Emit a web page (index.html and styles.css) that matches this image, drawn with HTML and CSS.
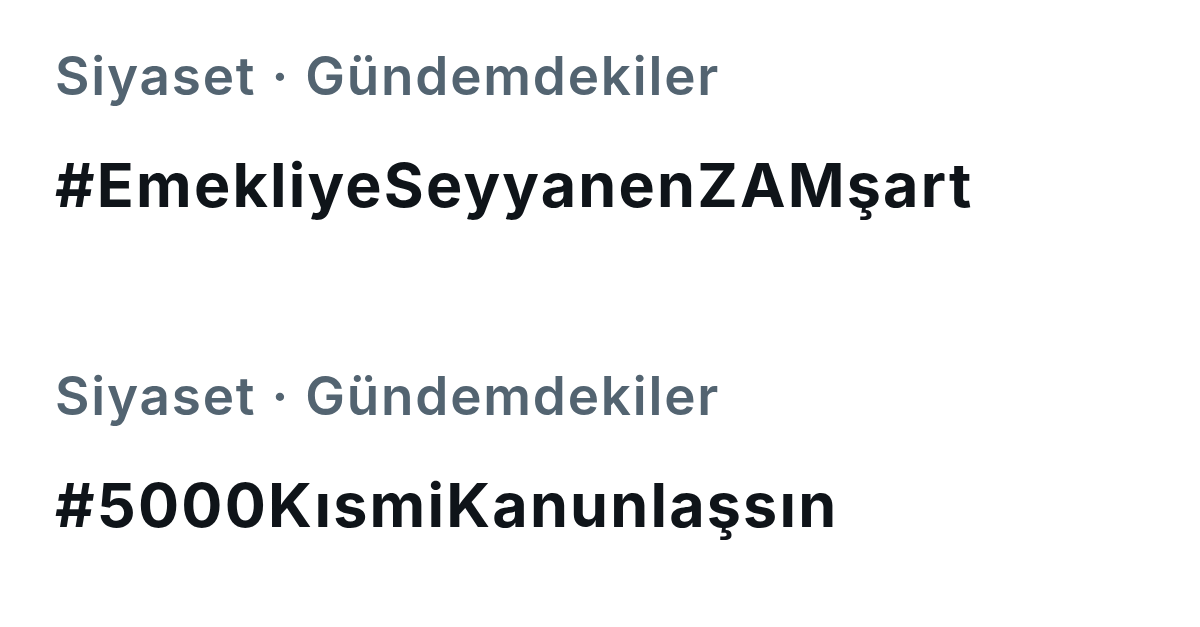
FILE: index.html
```html
<!DOCTYPE html>
<html lang="tr">
<head>
    <meta charset="UTF-8">
    <title>Gündemdekiler</title>
    <link rel="stylesheet" href="styles.css">
</head>
<body>
    <div class="trends">
        <div class="trend">
            <div class="trend-meta">Siyaset · Gündemdekiler</div>
            <div class="trend-name">#EmekliyeSeyyanenZAMşart</div>
        </div>
        <div class="trend">
            <div class="trend-meta">Siyaset · Gündemdekiler</div>
            <div class="trend-name">#5000KısmiKanunlaşsın</div>
        </div>
    </div>
</body>
</html>
```

FILE: styles.css
```css
body {
    margin: 0;
    background: #fff;
    font-family: Inter, "Noto Sans", sans-serif;
}

.trends {
    display: flex;
    flex-direction: column;
    gap: 143px;
    padding: 44px 0 0 55px;
}

.trend-meta {
    font-size: 53px;
    font-weight: 600;
    letter-spacing: 1.8px;
    color: #536471;
    line-height: 64px;
}

.trend-name {
    margin-top: 41px;
    font-size: 61px;
    font-weight: 700;
    letter-spacing: 2.2px;
    color: #0f1419;
    line-height: 72px;
}
```
